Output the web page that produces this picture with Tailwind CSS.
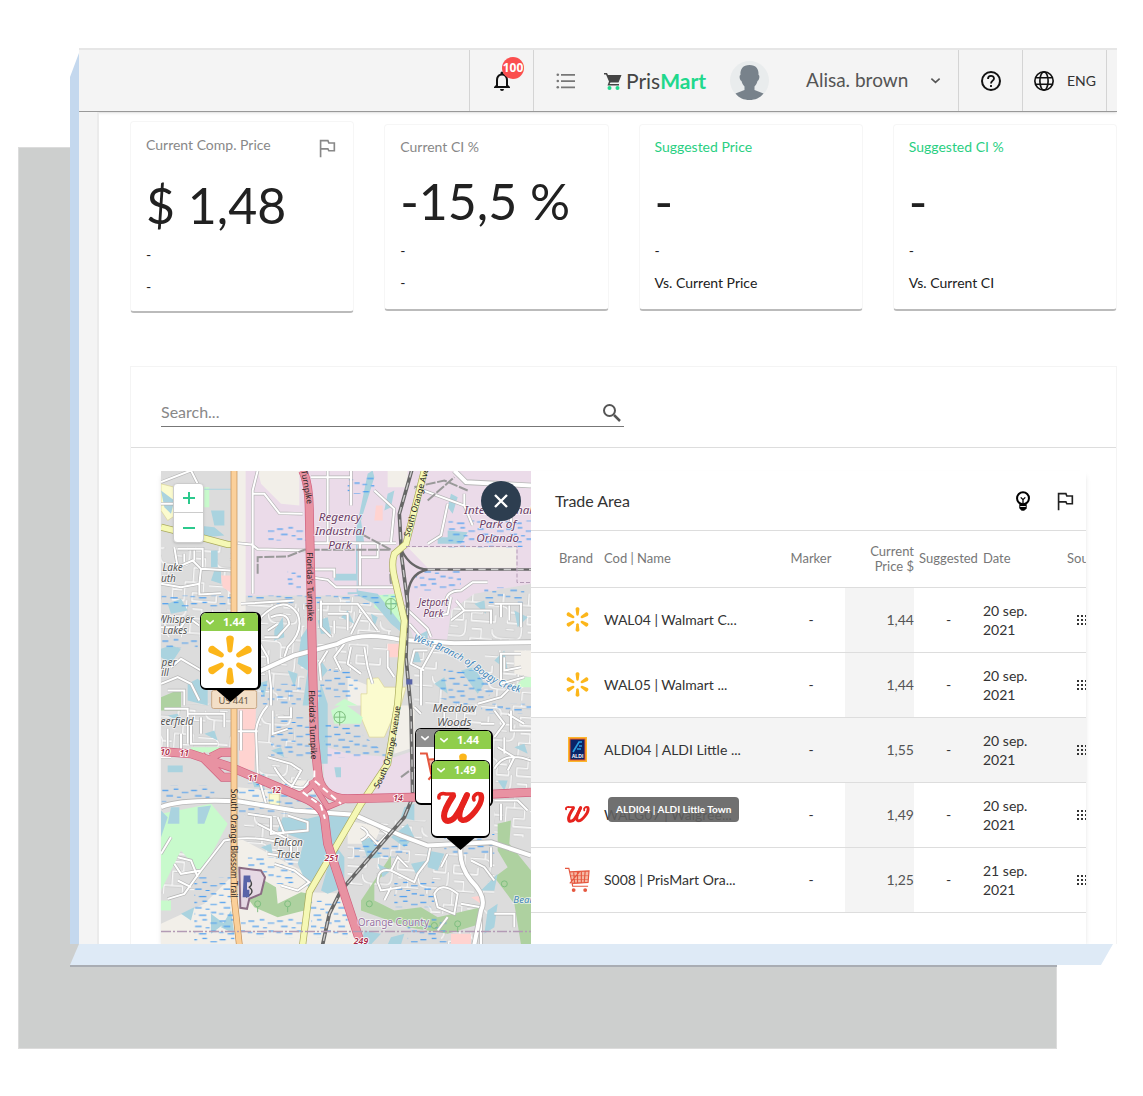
<!DOCTYPE html>
<html lang="en">
<head>
  <meta charset="UTF-8">
  <meta name="viewport" content="width=device-width, initial-scale=1.0">
  <title>PrisMart - Trade Area</title>
  <script src="https://cdn.jsdelivr.net/npm/@tailwindcss/browser@4"></script>
</head>
<body class="bg-white font-['Lato','Open_Sans',sans-serif] text-[#212121]">

  <!-- Shared icons -->
  <svg class="hidden">
    <symbol id="spark" viewBox="0 0 48 52">
      <g fill="#fcb61a">
        <path id="ray" d="M20 4C20-.5 28-.5 28 4L26.500 16C26 19 22 19 21.500 16Z"/>
        <use href="#ray" transform="rotate(60 24 26)"/>
        <use href="#ray" transform="rotate(120 24 26)"/>
        <use href="#ray" transform="rotate(180 24 26)"/>
        <use href="#ray" transform="rotate(240 24 26)"/>
        <use href="#ray" transform="rotate(300 24 26)"/>
      </g>
    </symbol>
    <symbol id="script-w" viewBox="0 0 48 34">
      <g fill="none" stroke="#e6231e" stroke-linecap="round" stroke-linejoin="round">
        <path stroke-width="3.500" d="M2 7C1 3 5 2 9 3L17 3"/>
        <path stroke-width="6" d="M16 5C12 11 7 20 7 25C7 32 14 31 18 26C23 20 27 11 30 4"/>
        <path stroke-width="5.500" d="M29 6C24 15 20 27 25 29C32 31 47 12 44 4"/>
        <path stroke-width="3.500" d="M44 4C41 0 35 5 37 9"/>
      </g>
    </symbol>
    <symbol id="trolley" viewBox="0 0 26 26">
      <path fill="#f6b9a4" d="M5 5L25 4L24 16L8 18Z"/>
      <path fill="none" stroke="#e5573f" stroke-width="1.200" d="M0 1.500H4L8 20H24M5 5L25 4L24 16L7 17M9 5L10 17M13 5V17M17 5V16M21 4L20 16M5 17L15 5"/>
      <path fill="none" stroke="#e5573f" stroke-width=".6" d="M6 9H25M6 13H24"/>
      <circle cx="9" cy="24" r="2" fill="#e5573f"/><circle cx="21" cy="24" r="2" fill="#e5573f"/>
    </symbol>
    <symbol id="flag" viewBox="0 0 24 24">
      <path fill="none" stroke="currentColor" stroke-width="1.800" d="M5 22V4H13L14 6.500H20V15H14L13 13H5"/>
    </symbol>
    <symbol id="chevron" viewBox="0 0 24 24">
      <path fill="none" stroke="currentColor" stroke-width="3.500" d="M3 8L12 16L21 8"/>
    </symbol>
    <symbol id="grid" viewBox="0 0 12 10">
      <path fill="#333" d="M0 0h2v2H0zM4 0h2v2H4zM8 0h2v2H8zM0 4h2v2H0zM4 4h2v2H4zM8 4h2v2H8zM0 8h2v2H0zM4 8h2v2H4zM8 8h2v2H8z"/>
    </symbol>
  </svg>

  <div class="relative pt-12 pb-[132px] pl-[70px] pr-[26px]">
    <div class="absolute top-[147px] bottom-[50px] left-[18px] right-[86px] bg-[#cdcfce] border border-[#dcdcdc]"></div>

    <div class="relative grid grid-cols-[9px_1fr]">
      <div class="bg-[#c4d8ee] [clip-path:polygon(100%_5px,100%_100%,0_100%,0_29px)]"></div>

      <!-- Screen -->
      <div class="bg-white min-w-0 overflow-hidden">
        <header class="flex justify-end h-16 bg-[#f4f4f4] border-t-2 border-t-[#e6e6e6] border-b border-b-[#999] shadow-sm">
          <button class="relative w-16 border-l border-[#d4d4d4] flex items-center justify-center" aria-label="Notifications">
            <svg class="size-6" viewBox="0 0 24 24" fill="#111"><path d="M12 22a2 2 0 0 0 2-2h-4a2 2 0 0 0 2 2zm6-6v-5c0-3.100-1.600-5.600-4.500-6.300V4a1.500 1.500 0 0 0-3 0v.7C7.600 5.400 6 7.900 6 11v5l-2 2v1h16v-1l-2-2zm-2 1H8v-6c0-2.500 1.500-4.500 4-4.500s4 2 4 4.500v6z"/></svg>
            <span class="absolute top-[7px] left-8 size-[22px] rounded-full bg-[#fb4e4e] text-white text-xs leading-[22px] font-bold font-['Open_Sans']">100</span>
          </button>
          <div class="flex items-center w-[425px] border-l border-[#d4d4d4] pl-5 pr-[17px]">
            <button class="mr-[26px]" aria-label="Menu">
              <svg class="size-6" viewBox="0 0 24 24" fill="#777"><path d="M7 5h14v1.800H7zM7 11.200h14V13H7zM7 17.500h14v1.800H7z"/><circle cx="3.800" cy="5.800" r="1.300"/><circle cx="3.800" cy="12" r="1.300"/><circle cx="3.800" cy="18.200" r="1.300"/></svg>
            </button>
            <a href="#" class="flex items-center text-[21px] text-[#444]">
              <svg class="w-[18px] h-5 mr-1" viewBox="0 0 18 20"><path fill="#444" d="M0 2h3l1 2h13.500l-3 7.500H6.500L5.500 13H15v1.500H3.500L5 10.500 2 3.500H0z"/><circle cx="5.500" cy="17" r="2" fill="#20d88c"/><circle cx="13.500" cy="17" r="2" fill="#20d88c"/></svg>
              Pris<span class="font-bold text-[#20d88c]">Mart</span>
            </a>
            <svg class="size-[39px] ml-6" viewBox="0 0 39 39"><circle cx="19.500" cy="19.500" r="19.500" fill="#e9eced"/><path fill="#78828b" d="M19.500 4C26 4 29 8 28.500 14c1.500 0 1 5-1 6-.5 2-1.500 4-3 5.500v3.500l9 3.500C30 37 25 39 19.500 39S9 37 5.500 32.500l9-3.500v-3.500C13 24 12 22 11.500 20c-2-1-2.500-6-1-6C10 8 13 4 19.500 4z"/></svg>
            <button class="flex flex-1 items-center justify-between ml-[37px] text-[19px] text-[#555]">Alisa. brown
              <svg class="size-[11px]"><use href="#chevron"/></svg>
            </button>
          </div>
          <button class="w-16 border-l border-[#d4d4d4] flex items-center justify-center" aria-label="Help">
            <svg class="size-6" viewBox="0 0 24 24" fill="none" stroke="#111" stroke-width="2"><circle cx="12" cy="12" r="9"/><path stroke-width="1.800" d="M9 10c0-4 6-4 6-.5 0 2-3 2.500-3 5M12 16v2"/></svg>
          </button>
          <button class="w-[84px] border-l border-[#d4d4d4] flex items-center justify-center gap-3 text-sm text-[#333]">
            <svg class="size-[22px]" viewBox="0 0 24 24" fill="none" stroke="#111" stroke-width="1.800"><circle cx="12" cy="12" r="10"/><ellipse cx="12" cy="12" rx="4.500" ry="10"/><path d="M3 8.500h18M3 15.500h18"/></svg>
            ENG
          </button>
          <div class="w-[11px] border-l border-[#d4d4d4]"></div>
        </header>

        <div class="flex">
          <aside class="w-5 shrink-0 bg-[#f4f4f4] border-r-2 border-[#ebebeb]"></aside>

          <main class="flex-1 min-w-0 pt-[9px] pl-[31px]">
            <!-- Summary cards -->
            <div class="grid grid-cols-4 gap-[30px] items-center h-48 text-sm">
              <div class="h-48 px-[15px] pt-[11px] rounded border border-[#f6f6f6] border-b-2 border-b-[#bbb]">
                <div class="flex justify-between text-[#888]"><span class="leading-6">Current Comp. Price</span><svg class="size-[22px] mt-1"><use href="#flag"/></svg></div>
                <div class="mt-3 text-[50px] leading-[68px]">$ 1,48</div>
                <div class="leading-8">-</div>
                <div class="leading-8">-</div>
              </div>
              <div class="h-[187px] px-[15px] pt-[10px] rounded border border-[#f6f6f6] border-b-2 border-b-[#bbb]">
                <div class="leading-6 text-[#888]">Current CI %</div>
                <div class="mt-2 text-[50px] leading-[68px]">-15,5 %</div>
                <div class="leading-8">-</div>
                <div class="leading-8">-</div>
              </div>
              <div class="h-[187px] px-[15px] pt-[10px] rounded border border-[#f6f6f6] border-b-2 border-b-[#bbb]">
                <div class="leading-6 text-[#29cf82]">Suggested Price</div>
                <div class="mt-2 text-[50px] leading-[68px]">-</div>
                <div class="leading-8">-</div>
                <div class="leading-8">Vs. Current Price</div>
              </div>
              <div class="h-[187px] px-[15px] pt-[10px] rounded border border-[#f6f6f6] border-b-2 border-b-[#bbb]">
                <div class="leading-6 text-[#29cf82]">Suggested CI %</div>
                <div class="mt-2 text-[50px] leading-[68px]">-</div>
                <div class="leading-8">-</div>
                <div class="leading-8">Vs. Current CI</div>
              </div>
            </div>

            <section class="mt-[53px] border border-b-0 border-[#f4f4f4]">
              <div class="px-[30px] pt-[30px] pb-5 border-b border-[#ddd]">
                <form class="flex w-1/2 h-[30px] border-b border-[#777]">
                  <input type="text" placeholder="Search..." aria-label="Search" class="flex-1 min-w-0 text-base outline-none placeholder:text-[#888]">
                  <button type="button" aria-label="Run search"><svg class="size-6" viewBox="0 0 24 24" fill="none" stroke="#555" stroke-width="2"><circle cx="9.500" cy="10.500" r="5.500"/><path stroke-width="2.500" d="M14 15l6 6"/></svg></button>
                </form>
              </div>

              <div class="flex h-[473px] mt-[23px] mx-[30px] shadow-md">
                <!-- Map -->
                <div class="relative w-2/5 overflow-hidden bg-[#dcdcdc] font-['Noto_Sans']">
                  <svg class="w-full h-full" viewBox="0 0 1110 1422" preserveAspectRatio="xMidYMid slice">
                    <defs>
                      <pattern id="streets" width="210" height="190" patternUnits="userSpaceOnUse" patternTransform="rotate(4) scale(.8)">
                        <g fill="none" stroke-linejoin="round" stroke-linecap="round">
                          <path stroke="#c2c2c2" stroke-width="10" d="M0 40H55Q75 40 75 60V100H120V30H190V70H150V100H210M0 100H30V75M75 60H110M20 130Q20 160 55 160H110Q130 160 130 130V100M55 160V190M55 0V40M155 130H190V165H150V190M150 0V30M75 125H100M0 165H20M190 165H210"/>
                          <path stroke="#fff" stroke-width="6" d="M0 40H55Q75 40 75 60V100H120V30H190V70H150V100H210M0 100H30V75M75 60H110M20 130Q20 160 55 160H110Q130 160 130 130V100M55 160V190M55 0V40M155 130H190V165H150V190M150 0V30M75 125H100M0 165H20M190 165H210"/>
                        </g>
                      </pattern>
                      <pattern id="wet" width="86" height="56" patternUnits="userSpaceOnUse">
                        <path stroke="#4a9df0" stroke-width="3.500" d="M4 8h18M38 4h14M62 14h20M16 24h20M48 28h12M2 42h14M28 46h22M64 38h16"/>
                      </pattern>
                      <g id="roads" fill="none">
                        <path d="M0 35L90 0M0 100H40L60 60L110 50M90 0L120 60M230 218L272 222L290 236L440 240M455 218H705M290 0L275 60L275 370M275 70L310 70L355 128L425 130M500 0V215M570 0V105M450 20H570M597 215V345M460 297H520V322M460 322L500 328L525 350H700M600 260H650V215M640 60L700 115L690 215M760 50L910 105L935 165M800 220L840 195L860 100M910 105V70M1050 100V165"/>
                        <path d="M40 230L50 290L95 270L120 295L210 300M120 295L115 340L60 350L0 340M50 235H125V290M70 250V275M100 240V270M115 340V372L180 368M0 470H60L80 440L115 465M30 590L60 565L120 600M0 640L50 620L90 640L115 690M20 660H70V705"/>
                        <path d="M235 430Q280 420 300 440L280 490L320 560L330 650V705M300 440Q370 370 410 430Q430 480 380 530L370 560M330 440Q380 420 385 460L350 500L310 500M350 460L320 480M240 400L400 390M270 540L250 590L300 610"/>
                        <path d="M480 390V470L510 500M480 400H590L620 440L650 480M500 430H560V480M520 450V490M600 430L570 490M550 520L520 560L540 600M570 530L560 580L600 610M610 530L620 590L635 640M500 540L475 580L480 630M680 540V590L700 620"/>
                        <path d="M720 400L800 475L810 500M745 460L780 500M830 510L780 600L780 705M870 380L860 430L810 440M855 405Q850 360 900 360L935 335H980M870 450L910 420H990V460M885 390L910 420M1000 400H1080V470M1020 400V440M1045 405V450M1080 550H1020V640L1090 620M1030 560V600L1080 590M800 540H760L750 580L790 600M1060 640L1020 680L950 700"/>
                        <path d="M320 705Q290 740 285 780L290 910L315 1000M230 782H290M335 720V790L380 775M350 740H390V710M20 775V850H60V790M80 730H190V770M90 750V820H170M120 740V790M10 715H80V820M30 860H0M240 720V840M380 970L420 900L390 880L320 860M340 890Q380 960 430 950L445 930"/>
                        <path d="M20 1285L70 1270L120 1200L190 1110Q260 1095 340 1112M40 1180L60 1210L120 1200M50 1160L90 1170L110 1220M50 1230L90 1250M0 1150L30 1100M260 1030L330 1040L330 1090L440 1080V1055L380 1035M290 1060L390 1110L390 1160L320 1150M350 1040L370 1090M340 1180L400 1200L445 1235L410 1260L360 1245M600 1070Q640 1090 600 1110M620 1090L650 1120L680 1090L640 1060"/>
                        <path d="M810 1120L800 1170L770 1210L760 1235L690 1200Q650 1190 650 1235L660 1260L720 1250M690 1200L710 1160L740 1190M690 1250L670 1290M820 1270Q840 1230 890 1270L880 1330L830 1310ZM900 1300L960 1310M860 1150L840 1190M930 1170L970 1190L1000 1230M990 1130V1190M940 1120H1000M960 1340V1422M860 1340L830 1380M1000 1330H1060V1370"/>
                        <path d="M1000 895Q1030 840 1110 870M1030 800V850M1050 720V780H1110M1000 720L1030 760L1000 800M1010 830L1060 860L1040 900M1000 990H1070L1100 1020M1020 1000V1050M960 760H1000M1040 730L1090 760M780 730L760 710M850 770V710"/>
                      </g>
                      <path id="avenues" fill="none" d="M290 605L400 555L530 520Q600 480 720 508L880 518L1110 515M0 1010Q60 985 230 992L400 1020L580 1033L720 1095L800 1125L990 1115L1110 1155M900 1120Q890 1180 930 1230Q980 1280 960 1320L940 1422M880 0L915 35L1110 45"/>
                      <path id="motorway" fill="none" d="M425 0Q445 40 445 130L455 600L460 800L470 900Q475 985 560 985L850 978L1110 965M0 843L90 850L210 890L410 975Q480 1000 490 1040L500 1120L600 1422M120 855L160 895L185 920H215M150 860L180 845H215"/>
                      <path id="ramps" fill="none" d="M450 930L500 1010L560 985M410 975Q450 960 470 920"/>
                      <path id="avenue-yellow" fill="none" d="M0 170L80 190L200 222H220M790 0L735 220L700 250Q690 280 700 320L730 450L710 700L680 880L600 1000L445 1265L425 1422"/>
                    </defs>

                    <!-- Land use -->
                    <rect width="1110" height="1422" fill="#dcdcdc"/>
                    <path fill="url(#streets)" opacity=".8" d="M0 230H210V500H0ZM255 400H430V690H255ZM470 380H690V500H470ZM470 520H690V600H470ZM860 370H1110V520H860ZM760 540H850V705H760ZM970 540H1110V690H970ZM0 700H210V830H0ZM270 720H400V830H270ZM820 700H1110V960H820ZM250 1020H470V1180H250ZM270 880H420V950H270ZM560 1050H800V1270H560ZM800 1150H1000V1330H800ZM0 1130H100V1270H0ZM0 1370H130V1422H0ZM1000 980H1110V1100H1000ZM840 1380H940V1422H840Z"/>
                    <path fill="#ebdbe9" d="M250 0H1110V340L940 370L870 420L858 510H760L715 375H250ZM485 825L560 850L700 860L760 840V975H520L490 930Z"/>
                    <path fill="#f2efe9" d="M228 0H254V440H228ZM290 0H415V105L360 100L300 40ZM740 230H1066V292H800ZM680 0H740V50H680ZM360 930H460V970H380ZM230 950L330 960V1000H230ZM230 1100L440 1210L450 1265L560 1270L600 1422H0V1360L130 1300L230 1200ZM560 1050L660 1070L640 1120H560ZM560 620L660 660L620 705H560ZM1060 540H1110V620L1060 610ZM700 705H760V830L700 850Z"/>
                    <path fill="#fbfbcf" stroke="#d9d293" stroke-width="2" d="M618 625L652 622L670 650H735L720 705L700 730L670 800H625L600 740V670H618ZM0 40L40 50L50 130L20 150L0 120ZM325 970H355V1005H325Z"/>
                    <path fill="#ffd3d0" d="M232 705H285L280 900L235 890ZM180 315H215V370L185 350ZM645 105H665V150H640ZM680 520H720V560H680ZM870 1390H930V1422H870ZM930 1280L960 1275V1300Z"/>
                    <path fill="#c8facc" d="M640 375L710 370L720 460L640 410ZM510 720L550 700L605 740L600 760L520 760ZM520 705L550 685L590 705ZM90 830H190V845H90ZM0 1030L150 1000L200 1060L120 1210L60 1140L0 1260ZM0 1290H30V1320H0ZM1090 620H1110V650H1060ZM130 50H145V110H130Z"/>
                    <path fill="#aed1a0" d="M0 680L60 655V720H0ZM265 1290L310 1230L345 1250L350 1300L420 1265L445 1270L430 1320L350 1340L280 1310ZM600 1290L690 1155V1190L640 1240V1290L700 1320L780 1310L830 1340L960 1310V1360L860 1390L740 1370L600 1320ZM1010 1060L1050 1050L1045 1120L1110 1200V1422H1080L1060 1300L1000 1220L1040 1190L1010 1140Z"/>

                    <!-- Water -->
                    <g fill="#aad3df">
                      <path d="M0 535L30 525L60 535L30 580L0 560ZM95 40L125 50L115 110L90 90ZM150 120H190V165H160ZM0 60L40 90L30 130L10 110ZM60 160L160 170L190 195L130 200ZM150 240H170V290H150ZM160 300H180V340L150 330ZM130 55H210V35H225V58H130Z"/>
                      <path d="M620 10L635 0L640 20L600 150L610 220H590V370L560 372V365H587V330H520V310H585V180ZM680 70L700 60L690 110L670 120ZM870 70L890 80L875 130L860 110ZM860 180L920 185L900 220H830V200H860ZM590 360L650 370L720 460L740 500L690 460L640 400L590 375Z"/>
                      <path d="M420 500L440 470L450 705H425L440 600L410 580ZM340 480L365 440L370 500L340 510ZM470 450L500 440L510 490L480 490ZM470 705L480 640L500 700V880H470ZM480 570L500 600L480 625ZM760 500L800 480L800 520ZM750 560L770 540L780 575H750ZM900 600L940 590L970 640L950 670ZM1000 570L1030 540L1040 600ZM80 640L110 625L140 650V705L80 690Z"/>
                      <path d="M350 1080L365 1040L440 1045L480 1035H575L540 1110L450 1270L410 1180L430 1110ZM520 1120L550 1160V1250L500 1270L480 1260ZM600 1110L630 1100L660 1160L620 1165ZM690 1100L740 1060L760 1100L730 1130ZM30 1010H55V1060H20ZM110 1010L150 1005L130 1060H110ZM650 1180L690 1200L665 1220ZM750 1180L800 1170L770 1220ZM960 1260L1010 1210L1000 1260ZM980 1320L1010 1300L1000 1370L970 1390ZM0 1020L20 1040L0 1100ZM150 1330L190 1360L150 1390ZM180 1370L210 1320L220 1390ZM610 1380L660 1390L630 1422H600ZM690 1400L730 1390L720 1422H680ZM800 1140L850 1150L830 1200L800 1190ZM1010 930H1040L1030 960ZM930 1040H980L960 1080ZM270 920L310 910V950L280 950ZM20 885H65V905H20ZM520 890H540V920H525ZM730 1010L760 1000V1050L720 1040Z"/>
                      <path d="M20 400L60 385L80 420L30 430ZM290 640L320 630L310 680ZM380 600L410 610L400 650ZM540 440L560 420L580 460ZM630 430L650 440L640 470ZM940 400L970 390L975 430ZM1060 420L1100 440L1070 470ZM820 640L850 620L860 670ZM20 735L50 730L60 755ZM130 790L160 780L170 810ZM330 840L360 830L370 860ZM1060 830L1090 820L1100 850ZM850 1060L880 1050L870 1090ZM300 1130L330 1120L335 1150ZM60 1330L100 1310L90 1350Z"/>
                    </g>
                    <path fill="url(#wet)" d="M320 165H450V210H320ZM380 300H420V355H380ZM0 375H210V410H0ZM260 375H720V400H260ZM860 150H1110V230H860ZM760 300H900V360H760ZM510 590H590V680H470V640ZM850 590L940 600L1000 660L940 720L830 680ZM0 500H110V530H0ZM330 740H470V860H330ZM480 760H600V860H500ZM600 790L690 860L580 850ZM0 945H160V995H0ZM230 940H470V1030H230ZM100 1220H220V1422H100ZM260 1160H400V1240H260ZM450 1290H560V1400H450ZM240 1340H440V1400H240ZM700 1230H820V1310H700ZM850 1100L1000 1080V1150H850ZM740 1340H860V1422H740ZM300 640H420V705H300ZM960 700H1110V730H960ZM580 1110H740V1160H580ZM970 350H1090V400H970ZM560 20H640V70H560Z"/>

                    <!-- Roads -->
                    <use href="#roads" stroke="#b5b5b5" stroke-width="10"/>
                    <use href="#roads" stroke="#fff" stroke-width="6"/>
                    <use href="#avenues" stroke="#b8b8b8" stroke-width="17"/>
                    <use href="#avenues" stroke="#fff" stroke-width="12"/>
                    <g fill="none">
                      <path stroke="#999" stroke-width="6" stroke-dasharray="30 5" d="M290 310V260L380 258L430 238H690L600 190M690 340Q680 280 715 240M760 50L850 30L920 60M800 90L880 20M720 920L760 890"/>
                      <path stroke="#666" stroke-width="11" d="M752 0L715 130L722 260L740 400L735 560L750 720L755 980L730 1040L540 1260L505 1330L485 1422"/>
                      <path stroke="#666" stroke-width="7" d="M722 240Q750 295 800 297H1110M740 400Q735 310 800 297"/>
                      <path stroke="#ccc" stroke-width="4" stroke-dasharray="22 16" d="M752 0L715 130L722 260L740 400L735 560L750 720L755 980L730 1040L540 1260L505 1330L485 1422M800 297H1110"/>
                    </g>
                    <use href="#avenue-yellow" stroke="#a9a95c" stroke-width="21"/>
                    <use href="#avenue-yellow" stroke="#f5f8b5" stroke-width="17"/>
                    <use href="#motorway" stroke="#d0607e" stroke-width="27"/>
                    <use href="#ramps" stroke="#d0607e" stroke-width="18"/>
                    <use href="#motorway" stroke="#e892a2" stroke-width="23"/>
                    <use href="#ramps" stroke="#e892a2" stroke-width="14"/>
                    <g fill="none">
                      <path stroke="#c08d55" stroke-width="20" d="M219 0V1280L235 1422"/>
                      <path stroke="#fbd09a" stroke-width="16" d="M219 0V1280L235 1422"/>
                      <path stroke="#fff" stroke-width="6" stroke-dasharray="20 12" d="M460 900V930L540 1000M425 965L480 1005L492 1045"/>
                      <path stroke="#b39bb5" stroke-width="5" stroke-dasharray="30 6 6 6" d="M0 1383H1110"/>
                      <path stroke="#b39bb5" stroke-width="3" stroke-dasharray="12 6" d="M735 228H1068V336H1110"/>
                      <path stroke="#8b6c84" stroke-width="6" fill="#e6d9e4" d="M235 1192L300 1200L312 1220L300 1270L265 1285L258 1315L238 1312Z"/>
                      <path stroke="#444" stroke-width="4" d="M260 1220Q280 1240 265 1250Q285 1265 255 1280"/>
                    </g>
                    <path fill="#5964a8" d="M248 1215H268V1235H258V1258H265V1280H245ZM736 626H754V642H736Z"/>
                    <g fill="none" stroke="#7fbf80" stroke-width="3"><circle cx="690" cy="400" r="16"/><path d="M674 400H706M690 384V432"/><circle cx="536" cy="740" r="17"/><path d="M519 740H553M536 723V765"/><circle cx="290" cy="1300" r="9"/><path d="M290 1309V1325"/><circle cx="380" cy="1300" r="9"/><path d="M380 1309V1325"/><circle cx="890" cy="1360" r="9"/><path d="M890 1369V1385"/><circle cx="820" cy="1365" r="9"/><circle cx="625" cy="1300" r="9"/><circle cx="1030" cy="1240" r="9"/></g>

                    <!-- Labels -->
                    <g font-family="Noto Sans" font-size="35" font-style="italic" text-anchor="middle" paint-order="stroke" stroke="#fff" stroke-opacity=".7" stroke-width="5">
                      <g fill="#6d4066"><text x="537" y="150">Regency</text><text x="537" y="192">Industrial</text><text x="537" y="234">Park</text><text x="1012" y="130">International</text><text x="1010" y="172">Park of</text><text x="1010" y="214">Orlando</text><text x="817" y="406" font-size="30">Jetport</text><text x="817" y="440" font-size="30">Park</text></g>
                      <g fill="#555" font-size="30"><text x="35" y="300">Lake</text><text x="22" y="335">uth</text><text x="45" y="458">Whisper</text><text x="42" y="490">Lakes</text><text x="24" y="585">per</text><text x="12" y="617">ill</text><text x="48" y="762">eerfield</text><text x="880" y="723" font-size="35">Meadow</text><text x="880" y="766" font-size="35">Woods</text><text x="382" y="1127">Falcon</text><text x="382" y="1162">Trace</text></g>
                      <g fill="#4285b8" font-size="29"><path id="creek" fill="none" stroke="none" d="M755 510Q880 550 950 605T1100 670"/><text text-anchor="start"><textPath href="#creek">West Branch of Boggy Creek</textPath></text><text x="1087" y="1298">Bear</text></g>
                      <text x="697" y="1365" font-style="normal" font-size="30" fill="#9874a3">Orange County</text>
                    </g>
                    <g font-family="Noto Sans" font-size="25" fill="#222">
                      <text transform="translate(420 0) rotate(80)">Turnpike</text>
                      <text transform="translate(437 245) rotate(89)">Florida's Turnpike</text>
                      <text transform="translate(443 660) rotate(88)">Florida's Turnpike</text>
                      <text transform="translate(210 955) rotate(90)">South Orange Blossom Trail</text>
                      <text transform="translate(745 200) rotate(-74)">South Orange Avenue</text>
                      <path id="soa" fill="none" d="M652 955Q700 880 718 705"/>
                      <text><textPath href="#soa">South Orange Avenue</textPath></text>
                    </g>
                    <g font-family="Noto Sans" font-size="26" font-weight="600" font-style="italic" fill="#a82a48" text-anchor="middle" paint-order="stroke" stroke="#fff" stroke-width="5"><text x="12" y="852">10</text><text x="70" y="857">11</text><text x="275" y="930">11</text><text x="345" y="967">12</text><text x="711" y="992">14</text><text x="512" y="1170">251</text><text x="600" y="1420">249</text></g>
                    <rect x="152" y="660" width="135" height="54" rx="6" fill="#f3dfc7" stroke="#c9a987" stroke-width="3"/>
                    <text x="218" y="700" font-family="Noto Sans" font-size="28" fill="#654" text-anchor="middle">US 441</text>
                  </svg>

                  <div class="absolute top-[12px] left-[12px] w-[31px] bg-white rounded-sm shadow border border-[#ccc] text-[#2cc98d]">
                    <button class="flex w-full h-[29px] items-center justify-center border-b border-[#ccc]" aria-label="Zoom in"><svg class="size-3" viewBox="0 0 12 12" stroke="currentColor" stroke-width="2"><path d="M0 6h12M6 0v12"/></svg></button>
                    <button class="flex w-full h-[29px] items-center justify-center" aria-label="Zoom out"><svg class="size-3" viewBox="0 0 12 12" stroke="currentColor" stroke-width="2"><path d="M0 6h12"/></svg></button>
                  </div>
                  <button class="absolute top-[10px] right-[10px] size-10 rounded-full bg-[#2d3e50] flex items-center justify-center" aria-label="Close map"><svg class="size-[14px]" viewBox="0 0 14 14" stroke="#fff" stroke-width="2.400"><path d="M1 1l12 12M13 1L1 13"/></svg></button>

                  <!-- Pins -->
                  <button class="absolute left-[39px] top-[141px] w-[61px]" aria-label="Walmart 1.44">
                    <span class="block h-[78px] rounded-md border border-r-3 border-b-2 border-black bg-white overflow-hidden">
                      <span class="flex h-[18px] items-center gap-2 pl-1 bg-[#8fce4b] text-white text-[11px] font-bold"><svg class="size-[10px]"><use href="#chevron"/></svg>1.44</span>
                      <svg class="block mx-auto mt-1 w-12 h-[50px]"><use href="#spark"/></svg>
                    </span>
                    <span class="block mx-auto w-7 h-3 bg-black [clip-path:polygon(0_0,100%_0,50%_100%)]"></span>
                  </button>
                  <button class="absolute left-[254px] top-[257px] w-[59px]" aria-label="PrisMart">
                    <span class="block h-[77px] rounded-md border border-b-2 border-black bg-white overflow-hidden">
                      <span class="flex h-[18px] items-center pl-1 bg-[#8f8f8f] text-white"><svg class="size-[10px]"><use href="#chevron"/></svg></span>
                      <svg class="block ml-1 mt-1 size-11"><use href="#trolley"/></svg>
                    </span>
                  </button>
                  <button class="absolute left-[273px] top-[259px] w-[59px]" aria-label="Walmart 1.44">
                    <span class="block h-[77px] rounded-md border border-r-2 border-b-2 border-black bg-white overflow-hidden">
                      <span class="flex h-[18px] items-center gap-2 pl-1 bg-[#8fce4b] text-white text-[11px] font-bold"><svg class="size-[10px]"><use href="#chevron"/></svg>1.44</span>
                      <svg class="block mx-auto mt-1 w-12 h-[50px]"><use href="#spark"/></svg>
                    </span>
                  </button>
                  <button class="absolute left-[270px] top-[289px] w-[59px]" aria-label="Walgreens 1.49">
                    <span class="block h-[78px] rounded-md border border-b-2 border-black bg-white overflow-hidden">
                      <span class="flex h-[18px] items-center gap-2 pl-1 bg-[#8fce4b] text-white text-[11px] font-bold"><svg class="size-[10px]"><use href="#chevron"/></svg>1.49</span>
                      <svg class="block mx-auto mt-3 w-12 h-[34px]"><use href="#script-w"/></svg>
                    </span>
                    <span class="block mx-auto w-7 h-3 bg-black [clip-path:polygon(0_0,100%_0,50%_100%)]"></span>
                  </button>
                </div>

                <!-- Trade area -->
                <div class="w-3/5 overflow-hidden">
                  <div class="flex items-center h-[60px] pl-6 pr-[10px] border-b border-[#ddd]">
                    <h2 class="flex-1 text-base text-[#333]">Trade Area</h2>
                    <button class="mr-5" aria-label="Suggestions"><svg class="size-[22px]" viewBox="0 0 24 24" fill="none" stroke="#000"><circle cx="12" cy="9" r="6.500" stroke-width="2.200"/><path stroke-width="1.400" d="M9.500 8l2.500 2.500L14.500 8M12 10.500V15"/><path fill="#000" d="M8.500 15.500h7v4.500l-2 2h-3l-2-2z"/><path stroke="#fff" stroke-width="1" d="M9 18h6"/></svg></button>
                    <button aria-label="Flag"><svg class="size-[22px]"><use href="#flag"/></svg></button>
                  </div>
                  <table class="table-fixed w-[616px] text-sm text-[#333]">
                    <colgroup><col class="w-[73px]"><col class="w-[173px]"><col class="w-[68px]"><col class="w-[69px]"><col class="w-[69px]"><col class="w-[84px]"><col class="w-20"></colgroup>
                    <thead>
                      <tr class="h-14 border-b border-[#ddd] text-[13px] leading-[15px] text-[#777]">
                        <th class="font-normal text-right pr-[11px]">Brand</th>
                        <th class="font-normal text-left">Cod | Name</th>
                        <th class="font-normal">Marker</th>
                        <th class="font-normal text-right">Current<br>Price $</th>
                        <th class="font-normal">Suggested</th>
                        <th class="font-normal text-left">Date</th>
                        <th class="font-normal text-left">Source</th>
                      </tr>
                    </thead>
                    <tbody>
                      <tr class="h-[65px] border-b border-[#ddd]">
                        <td><svg class="ml-[34px] size-[25px]"><use href="#spark"/></svg></td>
                        <td>WAL04 | Walmart C...</td>
                        <td class="text-center">-</td>
                        <td class="text-right bg-[#f4f4f4] text-[#555]">1,44</td>
                        <td class="text-center">-</td>
                        <td class="leading-[19px]">20 sep.<br>2021</td>
                        <td class="pl-[10px]"><svg class="w-3 h-[10px]"><use href="#grid"/></svg></td>
                      </tr>
                      <tr class="h-[65px] border-b border-[#ddd]">
                        <td><svg class="ml-[34px] size-[25px]"><use href="#spark"/></svg></td>
                        <td>WAL05 | Walmart ...</td>
                        <td class="text-center">-</td>
                        <td class="text-right bg-[#f4f4f4] text-[#555]">1,44</td>
                        <td class="text-center">-</td>
                        <td class="leading-[19px]">20 sep.<br>2021</td>
                        <td class="pl-[10px]"><svg class="w-3 h-[10px]"><use href="#grid"/></svg></td>
                      </tr>
                      <tr class="h-[65px] border-b border-[#ddd] bg-[#f4f4f4]">
                        <td><svg class="ml-[34px] size-[25px]" viewBox="0 0 25 25"><path fill="#fbb72c" d="M3 0h19v25H3z"/><path fill="#e5522a" d="M4.500 1.500h16v22h-16z"/><path fill="#0a2468" d="M5.500 2.500h14v20h-14z"/><path fill="none" stroke="#2b9fe0" stroke-width="1.700" d="M17 5h-3L8 15M14 9h3M12 12h4"/><text x="12.500" y="20.500" font-family="Liberation Sans" font-weight="bold" font-size="5" fill="#fff" text-anchor="middle">ALDI</text></svg></td>
                        <td class="relative">ALDI04 | ALDI Little ...
                          <span role="tooltip" class="absolute top-[79px] left-1 z-10 px-2 h-[25px] leading-[25px] rounded-sm bg-[#616161]/90 text-white text-[10px] font-bold whitespace-nowrap">ALDI04 | ALDI Little Town</span>
                        </td>
                        <td class="text-center">-</td>
                        <td class="text-right text-[#555]">1,55</td>
                        <td class="text-center">-</td>
                        <td class="leading-[19px]">20 sep.<br>2021</td>
                        <td class="pl-[10px]"><svg class="w-3 h-[10px]"><use href="#grid"/></svg></td>
                      </tr>
                      <tr class="h-[65px] border-b border-[#ddd]">
                        <td><svg class="ml-[34px] size-[25px]"><use href="#script-w"/></svg></td>
                        <td>WALG07 | Walgree...</td>
                        <td class="text-center">-</td>
                        <td class="text-right bg-[#f4f4f4] text-[#555]">1,49</td>
                        <td class="text-center">-</td>
                        <td class="leading-[19px]">20 sep.<br>2021</td>
                        <td class="pl-[10px]"><svg class="w-3 h-[10px]"><use href="#grid"/></svg></td>
                      </tr>
                      <tr class="h-[65px] border-b border-[#ddd]">
                        <td><svg class="ml-[34px] size-[25px]"><use href="#trolley"/></svg></td>
                        <td>S008 | PrisMart Ora...</td>
                        <td class="text-center">-</td>
                        <td class="text-right bg-[#f4f4f4] text-[#555]">1,25</td>
                        <td class="text-center">-</td>
                        <td class="leading-[19px]">21 sep.<br>2021</td>
                        <td class="pl-[10px]"><svg class="w-3 h-[10px]"><use href="#grid"/></svg></td>
                      </tr>
                    </tbody>
                  </table>
                </div>
              </div>
            </section>
          </main>
        </div>
      </div>

      <div class="col-span-2 h-[21px] mr-1 bg-[#deeaf6] [clip-path:polygon(9px_0,100%_0,calc(100%_-_12px)_100%,0_100%)]"></div>
      <div class="col-span-2 h-[2px] mr-[60px] bg-[#a9adb3]"></div>
    </div>
  </div>
</body>
</html>
